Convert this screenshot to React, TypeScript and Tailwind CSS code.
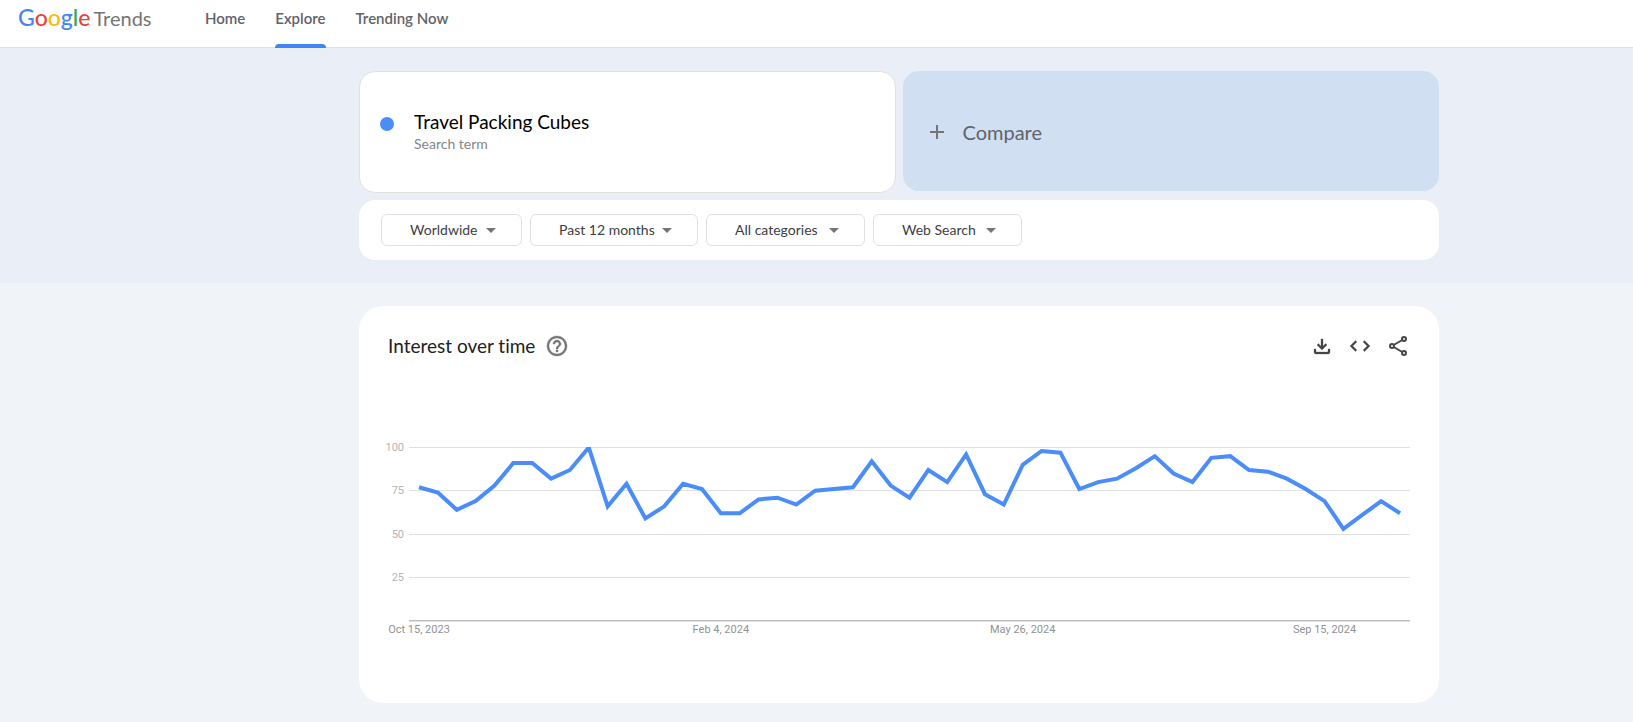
import React from "react";

const interest = [
  77, 74, 64, 69, 78, 91, 91, 82, 87, 100, 66, 79, 59, 66, 79, 76, 62, 62, 70, 71, 67, 75, 76, 77, 92, 78, 71, 87, 80,
  96, 73, 67, 90, 98, 97, 76, 80, 82, 88, 95, 85, 80, 94, 95, 87, 86, 82, 76, 69, 53, 61, 69, 62,
];

const dateLabels = [
  { index: 0, text: "Oct 15, 2023" },
  { index: 16, text: "Feb 4, 2024" },
  { index: 32, text: "May 26, 2024" },
  { index: 48, text: "Sep 15, 2024" },
];

const PLOT = { left: 50, right: 1051, top: 7.5, bottom: 180.5, firstX: 60, lastX: 1041 };

const xAt = (i: number) => PLOT.firstX + (i * (PLOT.lastX - PLOT.firstX)) / (interest.length - 1);
const yAt = (v: number) => PLOT.bottom - (v * (PLOT.bottom - PLOT.top)) / 100;

function Logo() {
  return (
    <a href="#" aria-label="Google Trends" className="flex w-[187px] shrink-0 items-baseline gap-[3px] leading-[34px]">
      <span className="text-[23px] font-medium">
        <span className="text-[#4285f4]">G</span>
        <span className="text-[#ea4335]">o</span>
        <span className="text-[#fbbc05]">o</span>
        <span className="text-[#4285f4]">g</span>
        <span className="text-[#34a853]">l</span>
        <span className="text-[#ea4335]">e</span>
      </span>
      <span className="text-xl text-[#757575]">Trends</span>
    </a>
  );
}

function Header() {
  return (
    <header className="flex h-12 items-stretch border-b border-[#e0e0e0] bg-white pl-[18px]">
      <Logo />
      <nav className="flex gap-[30px] text-[15px] font-semibold text-[#5f6368]">
        <a href="#" className="pt-1.5 leading-6">
          Home
        </a>
        <a href="#" aria-current="page" className="-mb-px flex flex-col justify-between pt-1.5 leading-6">
          Explore
          <span className="h-1 rounded-t bg-[#4285f4]" />
        </a>
        <a href="#" className="pt-1.5 leading-6">
          Trending Now
        </a>
      </nav>
    </header>
  );
}

function Filter({ label, value, className }: { label: string; value: string; className: string }) {
  return (
    <div className={`grid items-center ${className}`}>
      <select
        aria-label={label}
        className="col-start-1 row-start-1 h-8 w-full appearance-none rounded-md border border-[#e0e0e0] bg-white pl-7 text-sm text-[#3c4043]"
      >
        <option>{value}</option>
      </select>
      <svg
        viewBox="0 0 10 5"
        aria-hidden="true"
        className="pointer-events-none col-start-1 row-start-1 mr-[26px] h-[5px] w-[10px] justify-self-end fill-[#757575]"
      >
        <path d="M0 0h10L5 5z" />
      </svg>
    </div>
  );
}

function Chart() {
  const points = interest.map((v, i) => `${xAt(i)},${yAt(v)}`).join(" ");
  return (
    <svg viewBox="0 0 1080 200" className="w-full text-[11px]" role="img" aria-label="Interest over time chart">
      <clipPath id="plot">
        <rect x="50" y="7" width="1001" height="174" />
      </clipPath>
      {[100, 75, 50, 25].map((v) => (
        <g key={v}>
          <line
            x1={PLOT.left}
            x2={PLOT.right}
            y1={Math.floor(yAt(v)) + 0.5}
            y2={Math.floor(yAt(v)) + 0.5}
            stroke="#e0e0e0"
          />
          <text
            x="45"
            y={Math.floor(yAt(v)) + 4}
            textAnchor="end"
            className="fill-[#b3b3b3] font-['Roboto',sans-serif]"
          >
            {v}
          </text>
        </g>
      ))}
      <line x1={PLOT.left} x2={PLOT.right} y1="180.5" y2="180.5" stroke="#bdbdbd" />
      <line x1={PLOT.left} x2={PLOT.right} y1="181.5" y2="181.5" stroke="#e0e0e0" />
      <polyline points={points} fill="none" stroke="#4b8df8" strokeWidth="4" clipPath="url(#plot)" />
      {dateLabels.map((d) => (
        <text
          key={d.text}
          x={xAt(d.index)}
          y="193"
          textAnchor="middle"
          className="fill-[#929292] font-['Roboto',sans-serif]"
        >
          {d.text}
        </text>
      ))}
    </svg>
  );
}

export default function App() {
  return (
    <div className="min-h-screen bg-[#f0f4f9] font-['Lato',sans-serif] [font-variant-ligatures:none]">
      <Header />
      <section className="bg-[#e9eef7] pt-[23px] pr-[194px] pb-[23px] pl-[359px]">
        <div className="grid grid-cols-2 items-start gap-[7px]">
          <div className="flex h-[122px] items-center rounded-2xl border border-[#e0e0e0] bg-white pl-5">
            <span className="mb-4 size-[14px] rounded-full bg-[#4b8df8]" />
            <div className="pl-5">
              <h1 className="text-[19px] leading-6 text-black">Travel Packing Cubes</h1>
              <p className="text-sm leading-5 text-[#80868b]">Search term</p>
            </div>
          </div>
          <button
            type="button"
            className="flex h-[120px] items-center gap-[19px] rounded-2xl bg-[#d1dff3] pt-0.5 pl-[27px] text-xl text-[#5f6368]"
          >
            <svg viewBox="0 0 14 14" aria-hidden="true" className="size-[14px] stroke-[#757575]">
              <path d="M7 0v14M0 7h14" strokeWidth="2" />
            </svg>
            Compare
          </button>
        </div>
        <div className="mt-[7px] flex h-[60px] items-center gap-2 rounded-2xl bg-white pl-[22px]">
          <Filter label="Region" value="Worldwide" className="w-[141px]" />
          <Filter label="Time range" value="Past 12 months" className="w-[168px]" />
          <Filter label="Category" value="All categories" className="w-[159px]" />
          <Filter label="Search type" value="Web Search" className="w-[149px]" />
        </div>
      </section>
      <main className="pt-[23px] pr-[194px] pb-[19px] pl-[359px]">
        <section className="rounded-3xl bg-white pt-7 pb-[63px]">
          <div className="flex h-6 items-center pr-[29px] pl-[29px]">
            <h2 className="text-[19px] leading-6 text-[#212121]">Interest over time</h2>
            <button type="button" aria-label="Help" className="ml-[10px]">
              <svg viewBox="0 0 24 24" className="size-6 fill-[#757575] stroke-[#757575]" strokeWidth="0.4">
                <path d="M11 18h2v-2h-2v2zm1-16C6.48 2 2 6.48 2 12s4.48 10 10 10 10-4.48 10-10S17.52 2 12 2zm0 18c-4.41 0-8-3.59-8-8s3.59-8 8-8 8 3.59 8 8-3.59 8-8 8zm0-14c-2.21 0-4 1.79-4 4h2c0-1.1.9-2 2-2s2 .9 2 2c0 2-3 1.75-3 5h2c0-2.25 3-2.5 3-5 0-2.21-1.79-4-4-4z" />
              </svg>
            </button>
            <div className="ml-auto flex gap-[14px]">
              <button type="button" aria-label="Download">
                <svg viewBox="0 0 24 24" className="size-6 fill-[#444746] stroke-[#444746]" strokeWidth="0.3">
                  <path d="M12 16l-5-5 1.4-1.45 2.6 2.6V5h2v7.15l2.6-2.6L17 11l-5 5zm-6 4c-.55 0-1.02-.2-1.41-.59C4.2 19.02 4 18.55 4 18v-3h2v3h12v-3h2v3c0 .55-.2 1.02-.59 1.41-.39.39-.86.59-1.41.59H6z" />
                </svg>
              </button>
              <button type="button" aria-label="Embed">
                <svg viewBox="0 0 24 24" className="size-6 fill-[#444746] stroke-[#444746]" strokeWidth="0.3">
                  <path d="M8.9 16.1L4.8 12l4.1-4.1L7.5 6.5 2 12l5.5 5.5 1.4-1.4zm6.2 0l4.1-4.1-4.1-4.1 1.4-1.4L22 12l-5.5 5.5-1.4-1.4z" />
                </svg>
              </button>
              <button type="button" aria-label="Share">
                <svg viewBox="0 0 24 24" className="size-6 fill-none stroke-[#444746]" strokeWidth="2">
                  <circle cx="6" cy="12" r="2" />
                  <circle cx="18" cy="5" r="2" />
                  <circle cx="18" cy="19" r="2" />
                  <path d="M7.7 11l8.6-5M7.7 13l8.6 5" />
                </svg>
              </button>
            </div>
          </div>
          <div className="pt-[82px]">
            <Chart />
          </div>
        </section>
      </main>
    </div>
  );
}
